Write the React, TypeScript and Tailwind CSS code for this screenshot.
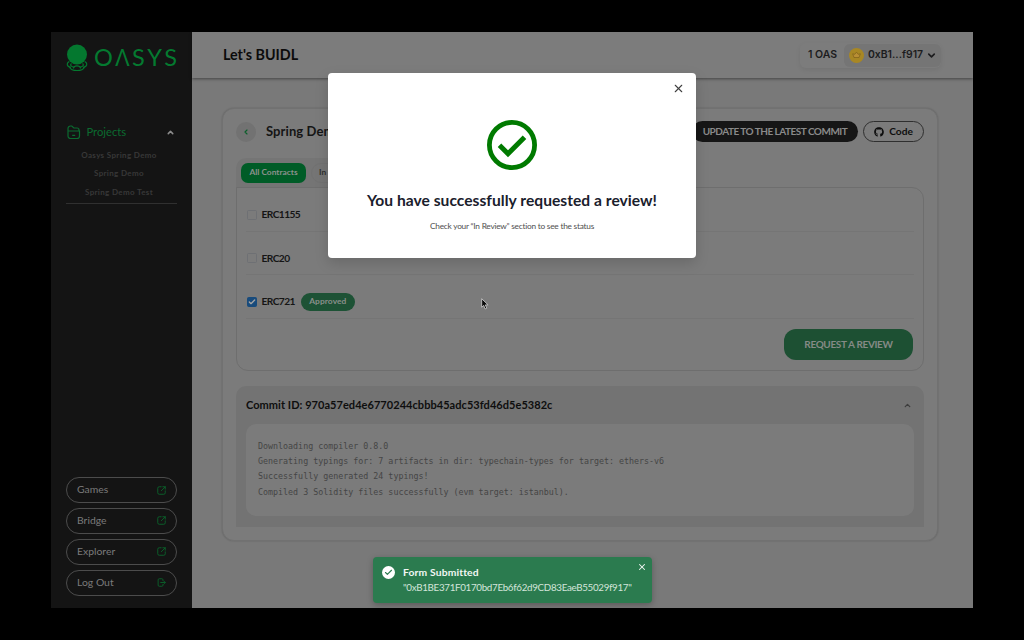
import type { ReactNode } from 'react';
import { Check, ChevronDown, ChevronLeft, ChevronUp, X } from 'lucide-react';
import { FaGithub } from 'react-icons/fa';

const projects = ['Oasys Spring Demo', 'Spring Demo', 'Spring Demo Test'];

const contracts = [
  { name: 'ERC1155', checked: false },
  { name: 'ERC20', checked: false },
  { name: 'ERC721', checked: true },
];

const logs = [
  'Downloading compiler 0.8.0',
  'Generating typings for: 7 artifacts in dir: typechain-types for target: ethers-v6',
  'Successfully generated 24 typings!',
  'Compiled 3 Solidity files successfully (evm target: istanbul).',
];

const Logo = () => (
  <div className="flex h-[28px] items-center">
    <svg width="22" height="28" viewBox="0 0 22 28" fill="none" stroke="#04782f" strokeWidth="1.1" className="shrink-0">
      <circle cx="11" cy="10.5" r="10" fill="#04782f" stroke="none" />
      <path d="M3.300 17.600C0 19.500.8 22.800 5 23.400M18.700 17.600c3.300 1.900 2.500 5.200-1.700 5.800" />
      <path d="M5.500 19.500c-2 1.600-.2 3.600 3 3.700M16.500 19.500c2 1.600.2 3.600-3 3.700" />
      <path d="M3.500 23.200c2 4.400 13 4.400 15 0M7.500 24.500c-.5-3.500 7.500-3.500 7 0" />
    </svg>
    <div className="-mt-[2px] ml-[6px] flex w-[83px] justify-between text-[23.5px] leading-[28px] text-[#047a30]">
      <span>O</span>
      <span className="font-['Noto_Sans']">Λ</span>
      <span>S</span>
      <span>Y</span>
      <span>S</span>
    </div>
  </div>
);

const ExternalIcon = () => (
  <svg width="9" height="9" viewBox="0 0 24 24" fill="none" stroke="#0b5f2a" strokeWidth="2.6" strokeLinecap="round" strokeLinejoin="round">
    <path d="M11 2H6a4 4 0 0 0-4 4v12a4 4 0 0 0 4 4h12a4 4 0 0 0 4-4v-5" />
    <path d="M15.500 2H22v6.500M22 2 11.500 12.500" />
  </svg>
);

const LogoutIcon = () => (
  <svg width="9" height="9" viewBox="0 0 24 24" fill="none" stroke="#0b5f2a" strokeWidth="2.6" strokeLinecap="round" strokeLinejoin="round">
    <path d="M16 7V5a3 3 0 0 0-3-3H6a3 3 0 0 0-3 3v14a3 3 0 0 0 3 3h7a3 3 0 0 0 3-3v-2" />
    <path d="M10 12h12M18.500 8.500 22 12l-3.500 3.500" />
  </svg>
);

const SideButton = ({ label, icon }: { label: string; icon: ReactNode }) => (
  <button className="flex h-[26px] w-full items-center justify-between rounded-full border border-[#4c4c4c] px-[10px] text-[10.4px] text-[#7b7b7b]">
    <span>{label}</span>
    {icon}
  </button>
);

const Sidebar = () => (
  <aside className="flex w-[141px] shrink-0 flex-col bg-[#141414] px-[15px] pt-3 pb-[12.5px]">
    <Logo />
    <div className="mt-[51px] flex h-[18px] items-center text-[#0b6b30]">
      <svg width="14" height="15" viewBox="0 0 14 15" fill="none" stroke="currentColor" strokeWidth="1.2" className="ml-[1px]">
        <path d="M1 6V3.500a2.500 2.500 0 0 1 2.500-2.500h1.300l2 2h3.200a2 2 0 0 1 2 2v1M1 6h11.500v5a2.500 2.500 0 0 1-2.500 2.500H3.500A2.500 2.500 0 0 1 1 11ZM5.200 10.300h3" />
      </svg>
      <span className="ml-[5.5px] text-[11.2px]">Projects</span>
      <ChevronUp size={9} strokeWidth={4} className="mr-[2px] ml-auto text-[#8c8c8c]" />
    </div>
    <ul className="mt-[4.5px] flex flex-col items-center pr-[5px] text-[8px] font-bold tracking-[0.35px] text-[#383838]">
      {projects.map((name) => (
        <li key={name} className="h-[18.6px] leading-[18.6px] whitespace-nowrap">
          {name}
        </li>
      ))}
    </ul>
    <div className="mt-[2px] h-px bg-[#303030]" />
    <div className="mt-auto flex flex-col gap-[4.8px]">
      {['Games', 'Bridge', 'Explorer'].map((label) => (
        <SideButton key={label} label={label} icon={<ExternalIcon />} />
      ))}
      <SideButton label="Log Out" icon={<LogoutIcon />} />
    </div>
  </aside>
);

const Header = () => (
  <header className="z-10 flex h-[46px] shrink-0 items-center justify-between bg-[#7c7c7c] pr-[32px] pl-[31px] shadow-[0_1px_3px_rgba(0,0,0,0.45)]">
    <h1 className="text-[14.3px] font-bold text-[#0b0b0b]">Let's BUIDL</h1>
    <div className="flex h-[25px] items-center rounded-[6px] pl-[8px] font-['Inter'] text-[10.5px] font-semibold text-[#1c1c1e] shadow-[0_2px_5px_rgba(0,0,0,0.07)]">
      <span className="w-[36px] whitespace-nowrap">1 OAS</span>
      <div className="flex h-[23px] w-[97px] items-center rounded-[6px] bg-[#757575] pl-[5px]">
        <span className="flex size-[15px] items-center justify-center rounded-full bg-[#a88724]">
          <svg width="9" height="8" viewBox="0 0 9 8" fill="#b98f35" stroke="#75591a" strokeWidth=".6">
            <path d="M.700 2.800 2.800 3.300 4.500 1.200l1.700 2.100 2.100-.5L7 6.500H2Z" />
          </svg>
        </span>
        <span className="ml-[4px] text-[10.4px]">0xB1...f917</span>
        <ChevronDown size={11} strokeWidth={3.5} className="ml-[3px]" />
      </div>
    </div>
  </header>
);

const Contracts = () => (
  <section className="-mt-px flex h-[184px] flex-col rounded-[12px] rounded-tl-none border border-[#6e6e6e] px-[9px]">
    {contracts.map(({ name, checked }) => (
      <div key={name} className="flex h-[43.5px] items-center border-b border-[#757575] pt-[11px]">
        <span
          className={`ml-[0.5px] flex size-[10px] items-center justify-center rounded-[1.5px] border ${
            checked ? 'border-[#184b7c] bg-[#184b7c]' : 'border-[#6e7074]'
          }`}
        >
          {checked && <Check size={8} strokeWidth={4} className="text-[#a5a5a5]" />}
        </span>
        <span className="ml-[5px] text-[10.2px] font-bold tracking-[-0.58px] text-[#151515]">{name}</span>
        {checked && (
          <span className="ml-[6px] flex h-[18px] w-[54px] items-center justify-center rounded-full bg-[#1d5235] text-[8.4px] font-bold tracking-[0.1px] text-[#8a8f8b]">
            Approved
          </span>
        )}
      </div>
    ))}
    <button className="mt-[10px] mr-px ml-auto h-[31px] w-[129px] rounded-[12px] bg-[#1d5033] text-[10px] font-bold tracking-[-0.35px] text-[#858a86]">
      REQUEST A REVIEW
    </button>
  </section>
);

const CommitLog = () => (
  <section className="mt-[15px] h-[141px] rounded-t-[10px] bg-[#737373] px-[10px]">
    <div className="flex h-[38px] items-center justify-between pr-[2px]">
      <h3 className="text-[11px] font-bold tracking-[0.05px] whitespace-nowrap text-[#0e0e0e]">
        Commit ID: 970a57ed4e6770244cbbb45adc53fd46d5e5382c
      </h3>
      <ChevronUp size={9} strokeWidth={3.5} className="text-[#3d3d3d]" />
    </div>
    <pre className="h-[92px] rounded-[10px] bg-[#7b7b7b] px-[12px] pt-[14.5px] font-['DejaVu_Sans_Mono',monospace] text-[8.33px] leading-[15.4px] text-[#454545]">
      {logs.join('\n')}
    </pre>
  </section>
);

const ProjectCard = () => (
  <div className="mt-[30px] mr-[35px] ml-[30px] h-[433px] rounded-[12px] border border-[#717171] bg-[#7b7b7b] px-[13px] shadow-[0_0_2px_rgba(0,0,0,0.2)]">
    <div className="flex h-[46px] items-center pb-px">
      <span className="flex size-[20px] items-center justify-center rounded-full bg-[#727272]">
        <ChevronLeft size={8} strokeWidth={3.5} className="text-[#0b5f2a]" />
      </span>
      <h2 className="ml-[10px] text-[13px] font-bold tracking-[0.1px] whitespace-nowrap text-[#151515]">Spring Demo</h2>
      <button className="ml-auto h-[21px] w-[166px] rounded-full bg-[#161616] text-[10px] font-bold tracking-[-0.5px] whitespace-nowrap text-[#8a8a8a]">
        UPDATE TO THE LATEST COMMIT
      </button>
      <button className="ml-[5px] flex h-[21px] w-[61px] items-center justify-center gap-[5px] rounded-full border border-[#2f2f2f] text-[10.2px] font-bold text-[#0e0e0e]">
        <FaGithub size={10} />
        Code
      </button>
    </div>
    <div className="mt-[3px] flex h-[30px] w-[230px] items-center gap-[5px] rounded-t-[10px] bg-[#757575] px-[5px] pb-px text-[8.4px] font-bold">
      <span className="flex h-[20px] w-[65px] items-center justify-center rounded-[7px] bg-[#005c27] text-[#8c918d]">
        All Contracts
      </span>
      <span className="flex h-[20px] w-[62px] items-center rounded-[10px] border border-[#717171] pl-[7px] text-[#303030]">
        In Review
      </span>
    </div>
    <Contracts />
    <CommitLog />
  </div>
);

const SuccessModal = () => (
  <div className="absolute top-[73px] left-[328px] z-20 flex h-[185px] w-[368px] flex-col items-center rounded-[4px] bg-white shadow-[0_5px_14px_rgba(0,0,0,0.15)]">
    <X size={13} strokeWidth={2} className="mt-[9px] mr-[11px] self-end text-[#404040]" />
    <svg width="50" height="50" viewBox="0 0 50 50" fill="none" stroke="#007a00" className="mt-[24.5px]">
      <circle cx="25" cy="25" r="22.6" strokeWidth="4.8" />
      <path d="m12.500 25.200 8.500 8.500L37.500 17.200" strokeWidth="5" />
    </svg>
    <h2 className="mt-[18px] text-[15.6px] leading-[24px] font-bold tracking-[0.03px] whitespace-nowrap text-[#1a202c]">
      You have successfully requested a review!
    </h2>
    <p className="mt-[7px] text-[8.3px] leading-[14px] tracking-[-0.23px] whitespace-nowrap text-[#4f4f4f]">
      Check your “In Review” section to see the status
    </p>
  </div>
);

const Toast = () => (
  <div className="absolute top-[557px] left-[373px] z-20 flex h-[46px] w-[279px] rounded-[4px] bg-[#2b7b4f] pt-[7px] pl-[9px] text-[#f2f7f4] shadow-[0_2px_6px_rgba(0,0,0,0.25)]">
    <span className="mt-[2px] flex size-[13px] items-center justify-center rounded-full bg-white">
      <Check size={9} strokeWidth={3} className="text-[#2b7b4f]" />
    </span>
    <div className="ml-[8px] whitespace-nowrap">
      <div className="text-[10.3px] leading-[16px] font-bold tracking-[0.15px]">Form Submitted</div>
      <div className="text-[9.8px] leading-[15px] tracking-[-0.32px] text-[#d3e5da]">
        "0xB1BE371F0170bd7Eb6f62d9CD83EaeB55029f917"
      </div>
    </div>
    <X size={10} strokeWidth={2.5} className="absolute top-[5px] right-[5px]" />
  </div>
);

const Cursor = () => (
  <svg width="8" height="12" viewBox="0 0 8 12" className="absolute top-[298px] left-[481px] z-20">
    <path d="M.700.700v8.600l2-1.900 1.400 3.500 1.700-.7-1.500-3.300h2.800Z" fill="#0a0a0a" stroke="#c4c4c4" strokeWidth=".9" />
  </svg>
);

const App = () => (
  <div className="relative h-[640px] w-[1024px] overflow-hidden bg-black px-[51px] py-[32px] font-['Lato',sans-serif]">
    <div className="flex h-[576px] w-[922px]">
      <Sidebar />
      <main className="flex flex-1 flex-col bg-[#797979]">
        <Header />
        <ProjectCard />
      </main>
    </div>
    <SuccessModal />
    <Toast />
    <Cursor />
  </div>
);

export default App;
